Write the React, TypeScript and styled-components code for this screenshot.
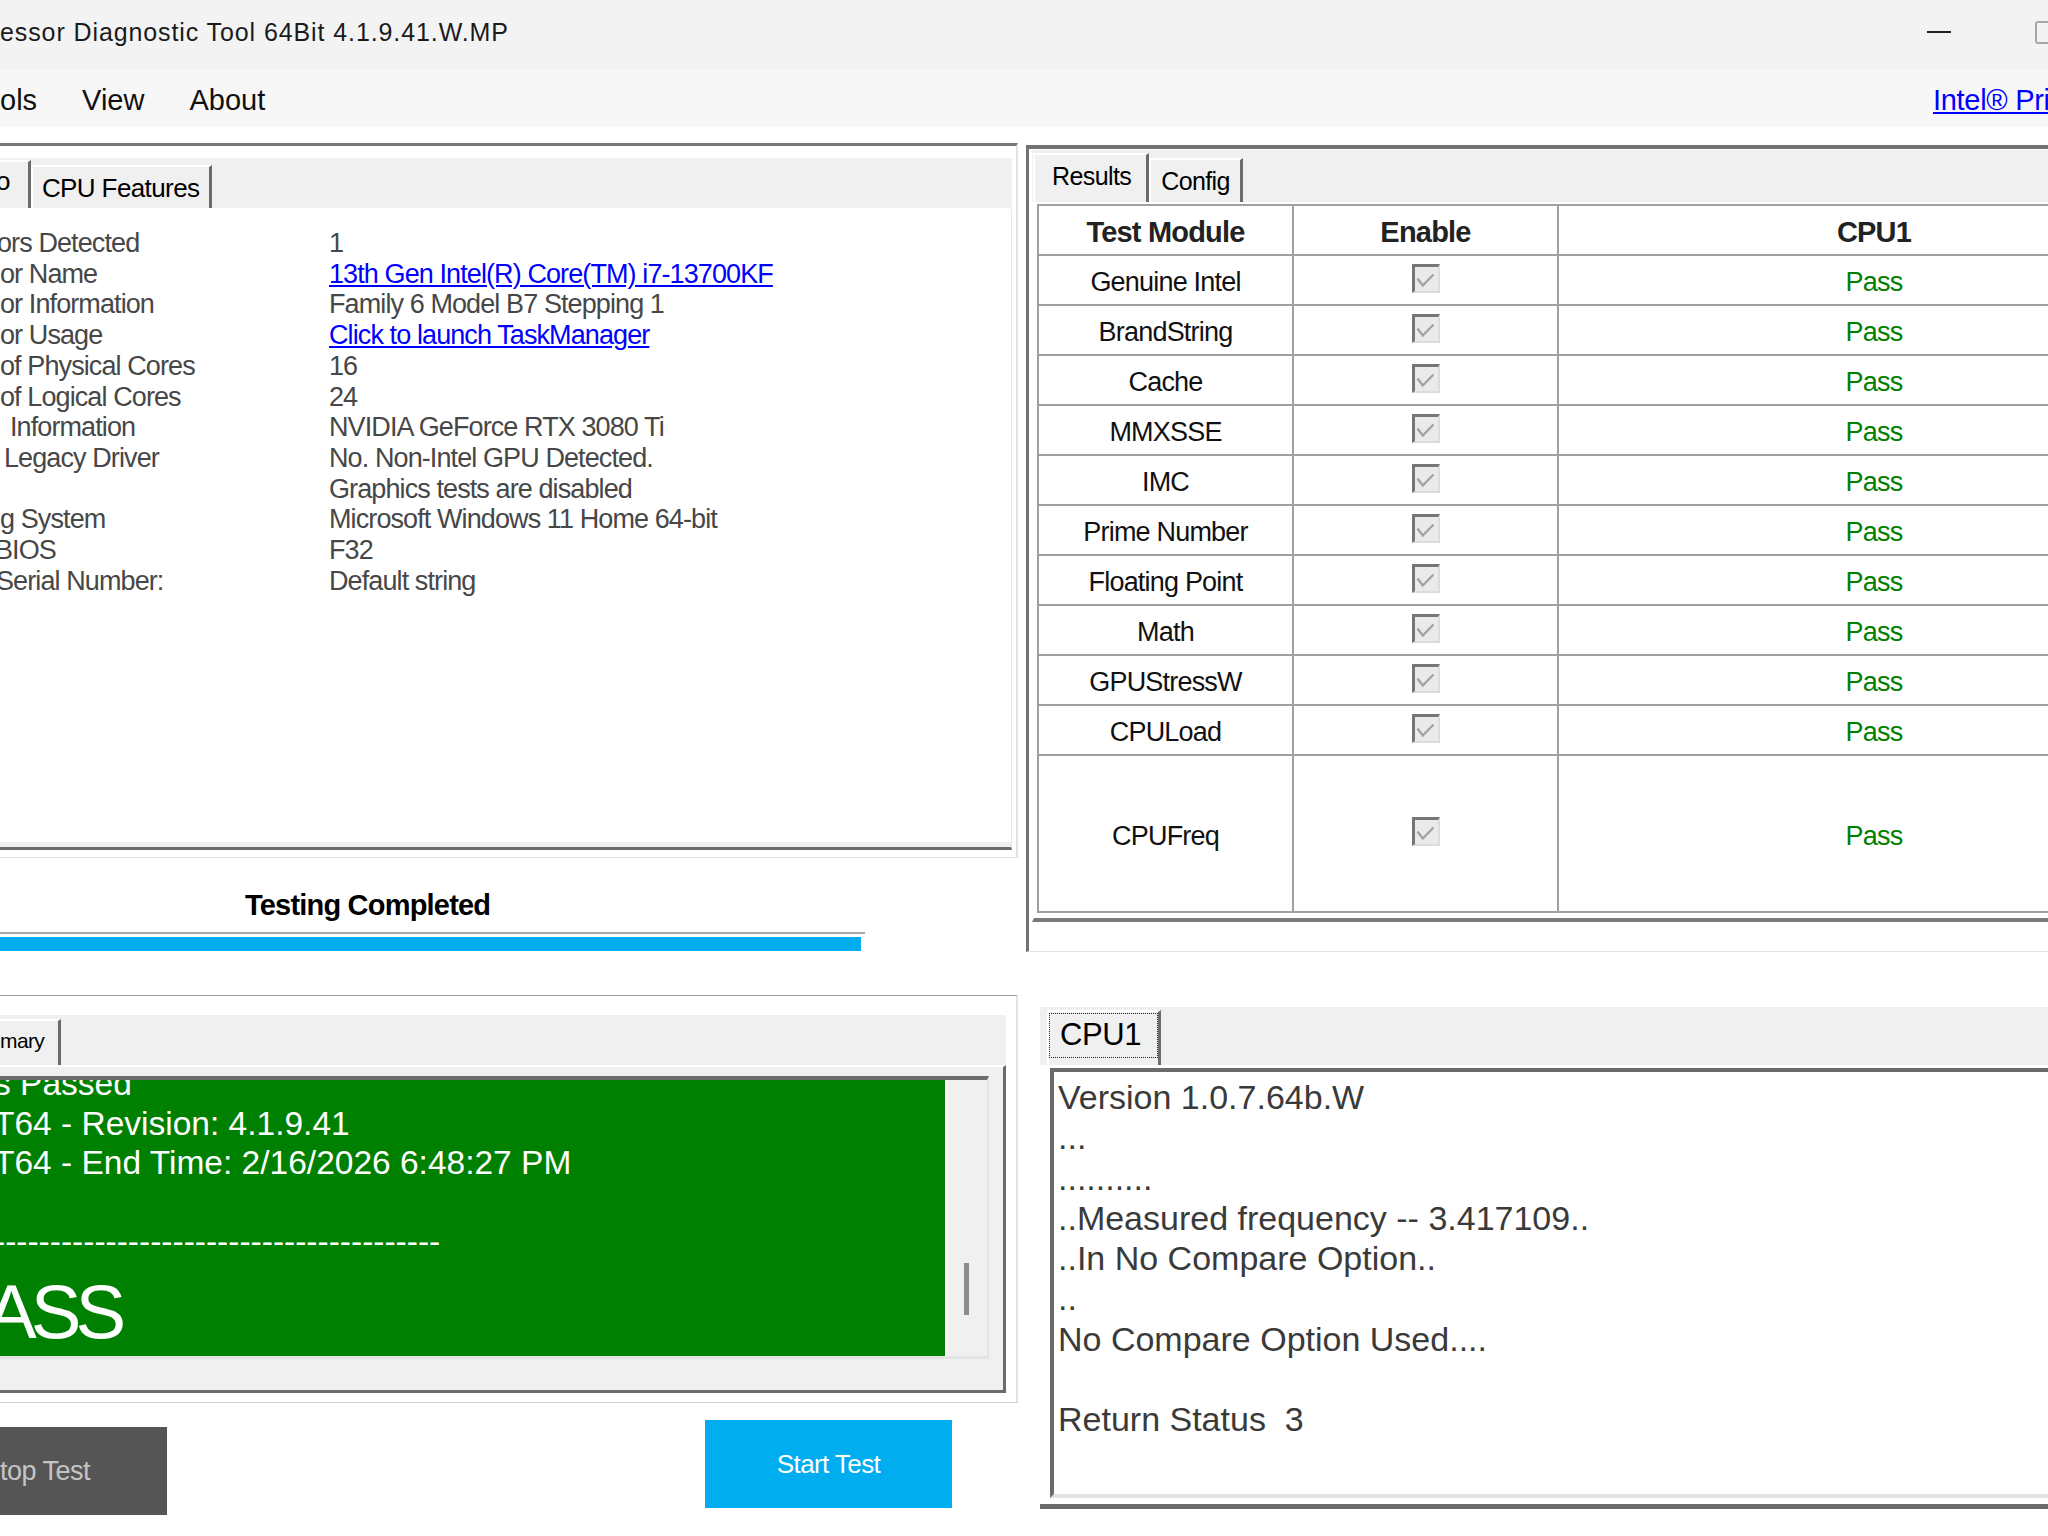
import React from 'react'
import styled, { createGlobalStyle } from 'styled-components'

const GlobalStyle = createGlobalStyle`
  html, body {
    margin: 0;
    padding: 0;
    background: #fff;
  }
  body {
    font-family: 'Liberation Sans', Arial, sans-serif;
    overflow: hidden;
  }
  * {
    box-sizing: border-box;
  }
`

const DARK = '#6b6b6b'
const GRID = '#a0a0a0'

const S = {
  Window: styled.div`
    width: 2048px;
    height: 1536px;
    overflow: hidden;
    background: #fff;
    color: #000;
  `,

  TitleBar: styled.div`
    display: flex;
    align-items: center;
    height: 70px;
    padding-bottom: 6px;
    background: #f3f3f4;
  `,

  TitleText: styled.div`
    font-size: 25px;
    letter-spacing: 0.9px;
    color: #1b1b1b;
    white-space: nowrap;
  `,

  WindowControls: styled.div`
    display: flex;
    align-items: center;
    gap: 84px;
    margin-left: auto;
    margin-right: -10px;
  `,

  Minimize: styled.span`
    display: block;
    width: 24px;
    height: 2px;
    background: #222;
  `,

  Maximize: styled.span`
    display: block;
    width: 23px;
    height: 23px;
    border: 2px solid #a8a8a8;
    border-radius: 3px;
  `,

  MenuBar: styled.div`
    display: grid;
    grid-template-columns: 1933px auto;
    align-items: center;
    height: 57px;
    padding-top: 3px;
    background: #f7f7f7;
  `,

  MenuItems: styled.div`
    display: flex;
    gap: 45px;
    font-size: 29px;
    color: #111;
  `,

  MenuItem: styled.span``,

  HeaderLink: styled.a`
    font-size: 29px;
    letter-spacing: -0.3px;
    color: #0000ff;
    text-decoration: underline;
    white-space: nowrap;
  `,

  Body: styled.div`
    display: grid;
    grid-template-columns: 1018px 1300px;
    column-gap: 8px;
    align-items: start;
  `,

  Column: styled.div`
    display: flex;
    flex-direction: column;
  `,

  InfoGroup: styled.div`
    display: flex;
    flex-direction: column;
    height: 715px;
    margin-top: 16px;
    padding: 12px 4px 7px 0;
    border-top: 3px solid #767676;
    border-right: 2px solid #e3e3e3;
    border-bottom: 1px solid #e3e3e3;
  `,

  TabStrip: styled.div<{ $h: number }>`
    display: flex;
    align-items: flex-end;
    flex-shrink: 0;
    height: ${p => p.$h}px;
    background: #f0f0f0;
  `,

  Tab: styled.div<{ $h: number; $pt: number; $pl: number; $pr: number; $fs: number; $ml?: number }>`
    height: ${p => p.$h}px;
    margin-left: ${p => p.$ml ?? 0}px;
    padding: ${p => p.$pt}px ${p => p.$pr}px 0 ${p => p.$pl}px;
    border-top: 2px solid #fff;
    border-left: 2px solid #fff;
    border-right: 3px solid ${DARK};
    background: #f0f0f0;
    font-size: ${p => p.$fs}px;
    line-height: 30px;
    letter-spacing: -0.6px;
    color: #000;
    white-space: nowrap;
  `,

  InfoPane: styled.div`
    flex: 1;
    padding-top: 18px;
    background: #fff;
    border-top: 2px solid #fff;
    border-right: 1px solid #e8e8e8;
    border-bottom: 3px solid ${DARK};
    box-shadow: inset 0 -5px 0 #efefef;
    overflow: hidden;
  `,

  InfoRow: styled.div`
    display: grid;
    grid-template-columns: 329px auto;
    font-size: 27px;
    line-height: 30.7px;
    letter-spacing: -0.9px;
    color: #474747;
    white-space: nowrap;
  `,

  InfoLabel: styled.span<{ $indent: number }>`
    margin-left: ${p => p.$indent}px;
  `,

  InfoValue: styled.span<{ $link?: boolean }>`
    color: ${p => (p.$link ? '#0000ff' : '#474747')};
    text-decoration: ${p => (p.$link ? 'underline' : 'none')};
  `,

  StatusArea: styled.div`
    height: 137px;
    padding-top: 30px;
  `,

  StatusText: styled.div`
    padding-left: 245px;
    font-size: 29px;
    font-weight: bold;
    line-height: 34px;
    letter-spacing: -0.8px;
    color: #000;
  `,

  ProgressTrack: styled.div`
    width: 865px;
    height: 19px;
    margin-top: 10px;
    padding: 3px 4px 0 0;
    border-top: 2px solid #a8a8a8;
  `,

  ProgressFill: styled.div`
    height: 14px;
    background: #00adef;
  `,

  SummaryGroup: styled.div`
    display: flex;
    flex-direction: column;
    height: 408px;
    padding: 19px 10px 9px 0;
    border-top: 1px solid ${GRID};
    border-right: 2px solid #e3e3e3;
    border-bottom: 1px solid #d0d0d0;
  `,

  SummaryPane: styled.div`
    flex: 1;
    padding: 9px 14px 0 0;
    background: #f0f0f0;
    border-top: 2px solid #fff;
    border-right: 3px solid ${DARK};
    border-bottom: 3px solid ${DARK};
  `,

  Console: styled.div`
    display: flex;
    height: 283px;
    border-top: 4px solid ${DARK};
    border-right: 2px solid #e3e3e3;
    border-bottom: 3px solid #e3e3e3;
  `,

  ConsoleText: styled.div`
    flex: 1;
    overflow: hidden;
    background: #008000;
    color: #fff;
    font-size: 33.5px;
    line-height: 39.5px;
    white-space: pre;
  `,

  ConsoleBody: styled.div`
    margin: -16px 0 0 -6px;
  `,

  BigResult: styled.div`
    margin: 12px 0 0 -47px;
    font-size: 76px;
    line-height: 76px;
    letter-spacing: -6px;
  `,

  ConsoleScroll: styled.div`
    width: 42px;
    padding: 183px 0 0 17px;
    background: #f0f0f0;
    border-left: 2px solid #fff;
  `,

  ScrollThumb: styled.div`
    width: 5px;
    height: 52px;
    background: #8c8c8c;
  `,

  ButtonRow: styled.div`
    display: flex;
    align-items: flex-start;
    padding-top: 17px;
  `,

  StopButton: styled.div`
    display: flex;
    align-items: center;
    width: 167px;
    height: 88px;
    margin-top: 7px;
    background: #555;
    color: #c4c4c4;
    font-size: 27px;
    letter-spacing: -0.5px;
  `,

  StartButton: styled.div`
    display: flex;
    align-items: center;
    justify-content: center;
    width: 247px;
    height: 88px;
    margin-left: 538px;
    background: #00adef;
    color: #fff;
    font-size: 26px;
    letter-spacing: -0.6px;
  `,

  ResultsGroup: styled.div`
    display: flex;
    flex-direction: column;
    height: 807px;
    margin-top: 18px;
    padding: 1px 0 29px 3px;
    border-top: 4px solid #727272;
    border-left: 3px solid #727272;
    border-bottom: 1px solid #e3e3e3;
  `,

  ResultsPane: styled.div`
    flex: 1;
    padding: 0 0 5px 3px;
    background: #fff;
    border-top: 2px solid #fff;
    border-left: 2px solid #fff;
    border-bottom: 4px solid #7a7a7a;
  `,

  Table: styled.div`
    display: grid;
    grid-template-columns: 255px 265px 632px;
    width: max-content;
    border-top: 2px solid ${GRID};
    border-left: 2px solid ${GRID};
  `,

  Cell: styled.div<{ $kind: 'head' | 'text' | 'pass' | 'check'; $tall?: boolean }>`
    display: flex;
    align-items: center;
    justify-content: center;
    height: ${p => (p.$tall ? 157 : 50)}px;
    padding-top: ${p => (p.$kind === 'check' ? 0 : p.$kind === 'head' ? 4 : 5)}px;
    padding-bottom: ${p => (p.$kind === 'check' ? 4 : 0)}px;
    border-right: 2px solid ${GRID};
    border-bottom: 2px solid ${GRID};
    font-size: ${p => (p.$kind === 'head' ? 29 : 27)}px;
    font-weight: ${p => (p.$kind === 'head' ? 'bold' : 'normal')};
    letter-spacing: -0.8px;
    color: ${p => (p.$kind === 'pass' ? '#008000' : p.$kind === 'head' ? '#222' : '#111')};
    white-space: nowrap;
  `,

  CheckBox: styled.span`
    display: block;
    width: 28px;
    height: 29px;
    background: #eaeaea;
    border-top: 3px solid #767676;
    border-left: 3px solid #767676;
    border-right: 2px solid #dcdcdc;
    border-bottom: 2px solid #dcdcdc;
  `,

  OutputGroup: styled.div`
    margin-top: 55px;
    padding-left: 14px;
  `,

  FocusRect: styled.span`
    display: block;
    padding: 4px 16px 5px 10px;
    border: 1px dotted #222;
    font-size: 31px;
    line-height: 34px;
    letter-spacing: -0.4px;
  `,

  OutputPage: styled.div`
    height: 444px;
    padding: 1px 0 6px 10px;
    background: #fff;
    border-top: 2px solid #fff;
    border-bottom: 5px solid ${DARK};
  `,

  OutputBox: styled.div`
    height: 430px;
    padding: 5px 0 0 4px;
    overflow: hidden;
    background: #fff;
    border-top: 4px solid ${DARK};
    border-left: 4px solid ${DARK};
    border-bottom: 4px solid #e3e3e3;
    font-size: 34px;
    line-height: 40.3px;
    color: #3a3a3a;
    white-space: pre;
  `,
}

type InfoRowData = { label: string; value: string; link?: boolean; indent?: number }

const infoRows: InfoRowData[] = [
  { label: 'ors Detected', value: '1', indent: -3 },
  { label: 'or Name', value: '13th Gen Intel(R) Core(TM) i7-13700KF', link: true },
  { label: 'or Information', value: 'Family 6 Model B7 Stepping 1' },
  { label: 'or Usage', value: 'Click to launch TaskManager', link: true },
  { label: 'of Physical Cores', value: '16' },
  { label: 'of Logical Cores', value: '24' },
  { label: 'Information', value: 'NVIDIA GeForce RTX 3080 Ti', indent: 10 },
  { label: 'Legacy Driver', value: 'No. Non-Intel GPU Detected.', indent: 4 },
  { label: '', value: 'Graphics tests are disabled' },
  { label: 'g System', value: 'Microsoft Windows 11 Home 64-bit' },
  { label: 'BIOS', value: 'F32', indent: -5 },
  { label: 'Serial Number:', value: 'Default string', indent: -4 },
]

const modules = [
  'Genuine Intel',
  'BrandString',
  'Cache',
  'MMXSSE',
  'IMC',
  'Prime Number',
  'Floating Point',
  'Math',
  'GPUStressW',
  'CPULoad',
  'CPUFreq',
]

const consoleLines = [
  's Passed',
  'T64 - Revision: 4.1.9.41',
  'T64 - End Time: 2/16/2026 6:48:27 PM',
  ' ',
  '-'.repeat(40),
]

const outputLines = [
  'Version 1.0.7.64b.W',
  '...',
  '..........',
  '..Measured frequency -- 3.417109..',
  '..In No Compare Option..',
  '..',
  'No Compare Option Used....',
  ' ',
  'Return Status  3',
]

const progress = 100

const DisabledCheck = () => (
  <S.CheckBox>
    <svg width="23" height="24" viewBox="0 0 23 24">
      <polyline points="2.5,11.5 7.8,18.5 18.5,7.5" fill="none" stroke="#a3a3a3" strokeWidth="2.4" />
    </svg>
  </S.CheckBox>
)

const App: React.FC = () => {
  return (
    <S.Window>
      <GlobalStyle />
      <S.TitleBar>
        <S.TitleText>essor Diagnostic Tool 64Bit 4.1.9.41.W.MP</S.TitleText>
        <S.WindowControls>
          <S.Minimize />
          <S.Maximize />
        </S.WindowControls>
      </S.TitleBar>

      <S.MenuBar>
        <S.MenuItems>
          <S.MenuItem>ols</S.MenuItem>
          <S.MenuItem>View</S.MenuItem>
          <S.MenuItem>About</S.MenuItem>
        </S.MenuItems>
        <S.HeaderLink>Intel® Privacy Notice</S.HeaderLink>
      </S.MenuBar>

      <S.Body>
        <S.Column>
          <S.InfoGroup>
            <S.TabStrip $h={50}>
              <S.Tab $h={48} $pt={4} $pl={0} $pr={18} $fs={26} $ml={-6}>
                o
              </S.Tab>
              <S.Tab $h={43} $pt={6} $pl={9} $pr={10} $fs={26}>
                CPU Features
              </S.Tab>
            </S.TabStrip>
            <S.InfoPane>
              {infoRows.map((row, i) => (
                <S.InfoRow key={i}>
                  <S.InfoLabel $indent={row.indent ?? 0}>{row.label}</S.InfoLabel>
                  <S.InfoValue $link={row.link}>{row.value}</S.InfoValue>
                </S.InfoRow>
              ))}
            </S.InfoPane>
          </S.InfoGroup>

          <S.StatusArea>
            <S.StatusText>Testing Completed</S.StatusText>
            <S.ProgressTrack>
              <S.ProgressFill style={{ width: `${progress}%` }} />
            </S.ProgressTrack>
          </S.StatusArea>

          <S.SummaryGroup>
            <S.TabStrip $h={50}>
              <S.Tab $h={46} $pt={5} $pl={0} $pr={14} $fs={21} $ml={-2}>
                mary
              </S.Tab>
            </S.TabStrip>
            <S.SummaryPane>
              <S.Console>
                <S.ConsoleText>
                  <S.ConsoleBody>
                    {consoleLines.map((line, i) => (
                      <div key={i}>{line}</div>
                    ))}
                    <S.BigResult>PASS</S.BigResult>
                  </S.ConsoleBody>
                </S.ConsoleText>
                <S.ConsoleScroll>
                  <S.ScrollThumb />
                </S.ConsoleScroll>
              </S.Console>
            </S.SummaryPane>
          </S.SummaryGroup>

          <S.ButtonRow>
            <S.StopButton>top Test</S.StopButton>
            <S.StartButton>Start Test</S.StartButton>
          </S.ButtonRow>
        </S.Column>

        <S.Column>
          <S.ResultsGroup>
            <S.TabStrip $h={52}>
              <S.Tab $h={49} $pt={6} $pl={17} $pr={15} $fs={25} $ml={1}>
                Results
              </S.Tab>
              <S.Tab $h={44} $pt={6} $pl={10} $pr={10} $fs={25}>
                Config
              </S.Tab>
            </S.TabStrip>
            <S.ResultsPane>
              <S.Table>
                <S.Cell $kind="head">Test Module</S.Cell>
                <S.Cell $kind="head">Enable</S.Cell>
                <S.Cell $kind="head">CPU1</S.Cell>
                {modules.map(name => {
                  const tall = name === 'CPUFreq'
                  return (
                    <React.Fragment key={name}>
                      <S.Cell $kind="text" $tall={tall}>
                        {name}
                      </S.Cell>
                      <S.Cell $kind="check" $tall={tall}>
                        <DisabledCheck />
                      </S.Cell>
                      <S.Cell $kind="pass" $tall={tall}>
                        Pass
                      </S.Cell>
                    </React.Fragment>
                  )
                })}
              </S.Table>
            </S.ResultsPane>
          </S.ResultsGroup>

          <S.OutputGroup>
            <S.TabStrip $h={58}>
              <S.Tab $h={55} $pt={1} $pl={0} $pr={0} $fs={31} $ml={7}>
                <S.FocusRect>CPU1</S.FocusRect>
              </S.Tab>
            </S.TabStrip>
            <S.OutputPage>
              <S.OutputBox>
                {outputLines.map((line, i) => (
                  <div key={i}>{line}</div>
                ))}
              </S.OutputBox>
            </S.OutputPage>
          </S.OutputGroup>
        </S.Column>
      </S.Body>
    </S.Window>
  )
}

export default App
